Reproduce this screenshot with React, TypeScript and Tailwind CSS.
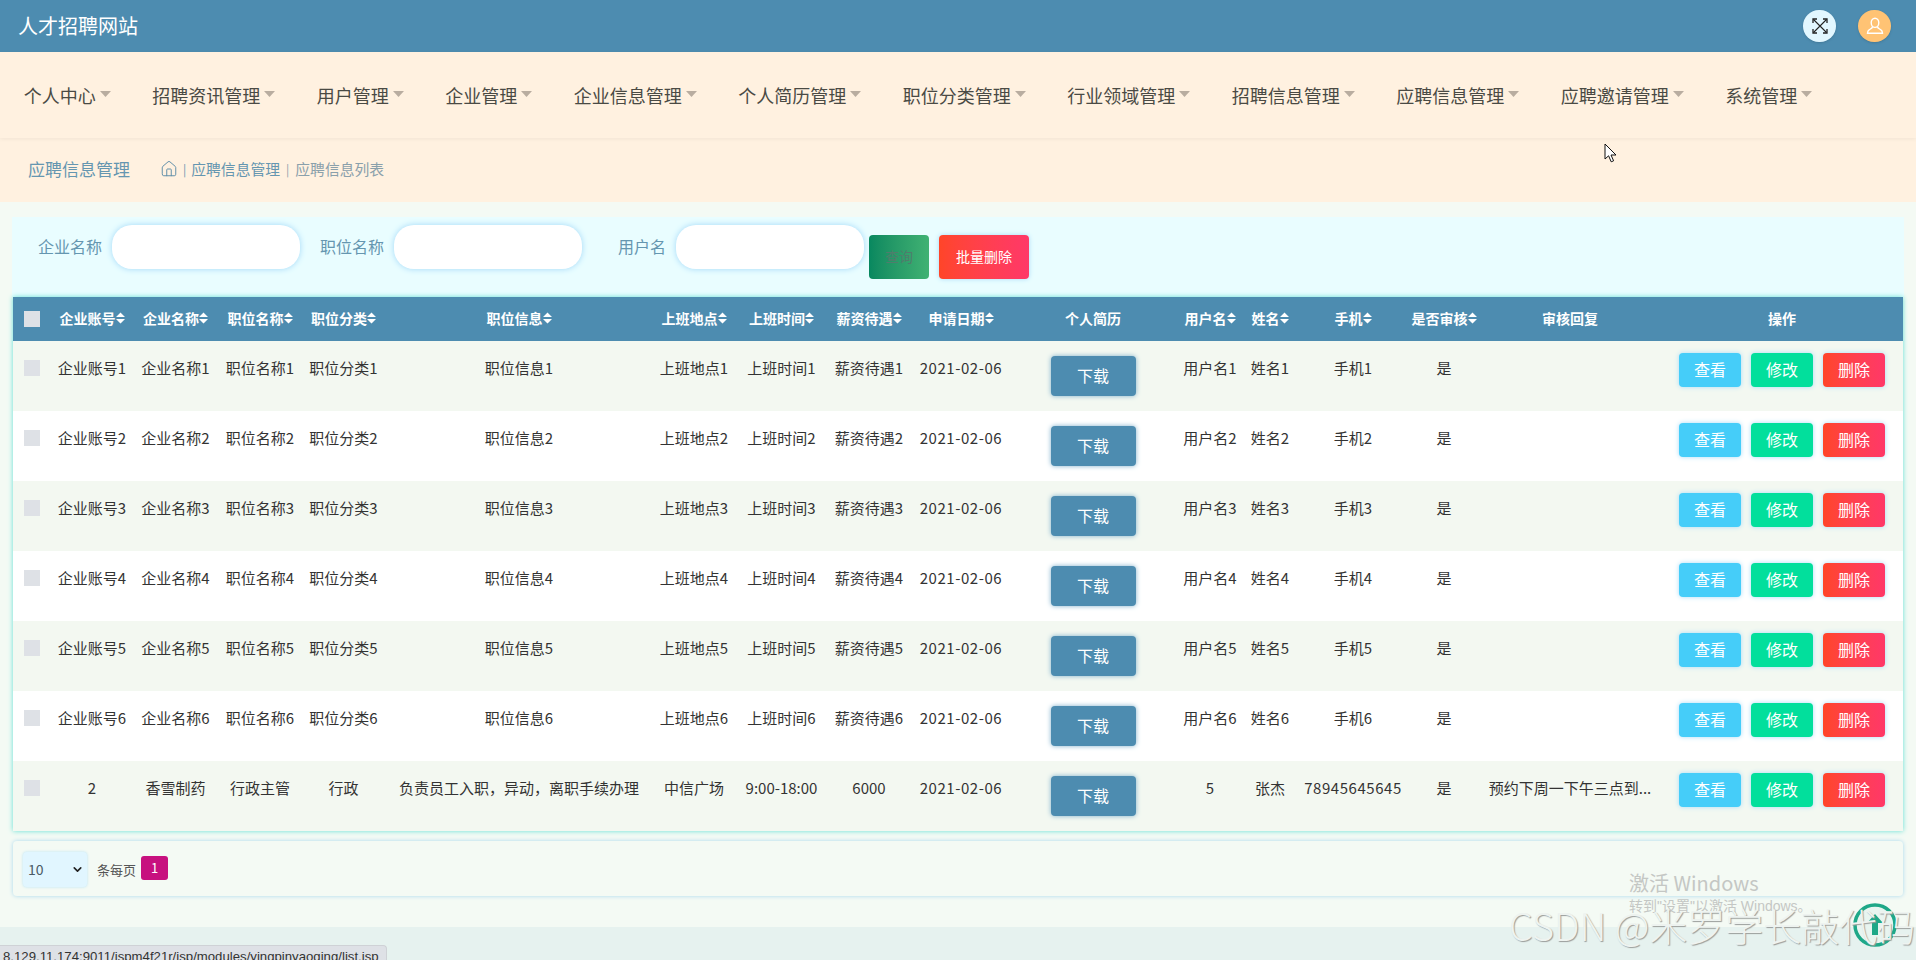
import React from 'react';
import { ChevronDown, Home } from 'lucide-react';

const navItems = ['个人中心', '招聘资讯管理', '用户管理', '企业管理', '企业信息管理', '个人简历管理', '职位分类管理', '行业领域管理', '招聘信息管理', '应聘信息管理', '应聘邀请管理', '系统管理'];

const columns = [
  { title: '企业账号', sort: true, width: 'w-[80px]' },
  { title: '企业名称', sort: true, width: 'w-[87px]' },
  { title: '职位名称', sort: true, width: 'w-[82px]' },
  { title: '职位分类', sort: true, width: 'w-[85px]' },
  { title: '职位信息', sort: true, width: 'w-[266px]' },
  { title: '上班地点', sort: true, width: 'w-[84px]' },
  { title: '上班时间', sort: true, width: 'w-[91px]' },
  { title: '薪资待遇', sort: true, width: 'w-[84px]' },
  { title: '申请日期', sort: true, width: 'w-[100px]' },
  { title: '个人简历', sort: false, width: 'w-[164px]' },
  { title: '用户名', sort: true, width: 'w-[70px]' },
  { title: '姓名', sort: true, width: 'w-[50px]' },
  { title: '手机', sort: true, width: 'w-[116px]' },
  { title: '是否审核', sort: true, width: 'w-[66px]' },
  { title: '审核回复', sort: false, width: 'w-[186px]' },
];

type Row = { before: string[]; after: string[] };

const rows: Row[] = [1, 2, 3, 4, 5, 6].map((n) => ({
  before: [`企业账号${n}`, `企业名称${n}`, `职位名称${n}`, `职位分类${n}`, `职位信息${n}`, `上班地点${n}`, `上班时间${n}`, `薪资待遇${n}`, '2021-02-06'],
  after: [`用户名${n}`, `姓名${n}`, `手机${n}`, '是', ''],
}));

rows.push({
  before: ['2', '香雪制药', '行政主管', '行政', '负责员工入职，异动，离职手续办理', '中信广场', '9:00-18:00', '6000', '2021-02-06'],
  after: ['5', '张杰', '78945645645', '是', '预约下周一下午三点到...'],
});

const Caret = () => (
  <svg width="11" height="6" viewBox="0 0 11 6" className="ml-[4px] mt-[-2px] shrink-0">
    <path d="M0 0h11L5.5 6z" fill="#b9ada0" />
  </svg>
);

const SortIcon = () => (
  <svg width="9" height="12" viewBox="0 0 9 12" className="shrink-0">
    <path d="M4.5 0.5L9 5H0zM4.5 11.5L0 7h9z" fill="#ffffff" />
  </svg>
);

const Cell = ({ text }: { text: string }) => (
  <td className="align-top text-center pt-[15px] px-0">
    <div className={/^[\d-]{7,}$/.test(text) ? 'leading-[24px] whitespace-nowrap tracking-[0.55px]' : 'leading-[24px] whitespace-nowrap'}>{text}</div>
  </td>
);

const App: React.FC = () => {
  return (
    <div className="relative w-full h-[960px] overflow-hidden flex flex-col bg-[#e6f2ef] font-['Noto_Sans_CJK_SC','Microsoft_YaHei',sans-serif] text-[#333333]">

      {/* Top bar */}
      <header className="h-[52px] shrink-0 bg-[#4d8cb0] flex items-center justify-between pl-[18px] pr-[25px]">
        <div className="text-[20px] text-white">人才招聘网站</div>
        <div className="flex items-center gap-[22px]">
          <div className="w-[33px] h-[32px] rounded-full bg-[#e2f7ff] flex items-center justify-center shadow-sm">
            <svg width="16" height="16" viewBox="0 0 16 16" fill="none" stroke="#222222" strokeWidth="1.1">
              <path d="M1.5 1.5l13 13M14.5 1.5l-13 13" />
              <path d="M1 5V1h4M11 1h4v4M15 11v4h-4M5 15H1v-4" strokeWidth="1.3" />
            </svg>
          </div>
          <div className="w-[33px] h-[32px] rounded-full bg-[#ffc374] flex items-center justify-center shadow-sm">
            <svg width="18" height="18" viewBox="0 0 18 18" fill="none" stroke="#ffffff" strokeWidth="1.4">
              <ellipse cx="9" cy="5.8" rx="3.8" ry="4.6" />
              <path d="M6.6 9.6c-.2 1.6-1.8 2.2-3.2 3C2.2 13.300 1.500 14.300 1.500 16.300h15c0-2-.7-3-1.900-3.700-1.400-.8-3-1.400-3.200-3" />
            </svg>
          </div>
        </div>
      </header>

      {/* Nav */}
      <nav className="h-[86px] shrink-0 bg-[#fff1e0] flex items-center pl-[3px] shadow-[0_1px_4px_rgba(0,0,0,0.06)] relative z-10">
        {navItems.map((item) => (
          <div key={item} className="flex items-center px-[20.75px] text-[18px] leading-[24px] text-[#4a4a44] whitespace-nowrap">
            <span>{item}</span>
            <Caret />
          </div>
        ))}
      </nav>

      {/* Breadcrumb */}
      <div className="h-[64px] shrink-0 bg-[#fff1e0] flex items-center pl-[28px] pb-[2px]">
        <div className="text-[17px] text-[#6596b0] w-[132px]">应聘信息管理</div>
        <Home size={18} strokeWidth={1.3} color="#5f8ea8" />
        <span className="text-[12px] text-[#6596b0] mx-[5px]">|</span>
        <span className="text-[14.8px] text-[#6596b0]">应聘信息管理</span>
        <span className="text-[12px] text-[#8aa0ab] mx-[6px]">|</span>
        <span className="text-[14.8px] text-[#8aa0ab]">应聘信息列表</span>
      </div>

      {/* Main */}
      <main className="h-[725px] shrink-0 bg-[#f4faf4] pt-[15px] pl-[12px] pr-[12px]">

        {/* Search */}
        <div className="h-[80px] bg-[#e9fdff] flex items-start pt-[8px] pl-[26px]">
          <label className="flex items-center text-[16px] text-[#6596b0]">
            <span className="pb-[2px]">企业名称</span>
            <input className="w-[188px] h-[44px] ml-[10px] rounded-[20px] bg-white shadow-[0_0_6px_#a0d8f8] outline-none" />
          </label>
          <label className="flex items-center text-[16px] text-[#6596b0] ml-[20px]">
            <span className="pb-[2px]">职位名称</span>
            <input className="w-[188px] h-[44px] ml-[10px] rounded-[20px] bg-white shadow-[0_0_6px_#a0d8f8] outline-none" />
          </label>
          <label className="flex items-center text-[16px] text-[#6596b0] ml-[36px]">
            <span className="pb-[2px]">用户名</span>
            <input className="w-[188px] h-[44px] ml-[10px] rounded-[20px] bg-white shadow-[0_0_6px_#a0d8f8] outline-none" />
          </label>
          <button className="w-[60px] h-[44px] ml-[5px] mt-[10px] pb-[2px] rounded-[4px] bg-gradient-to-r from-[#07885f] to-[#40b273] text-[14px] text-[#4f7d6c]">查询</button>
          <button className="w-[90px] h-[44px] ml-[10px] mt-[10px] pb-[2px] rounded-[4px] bg-gradient-to-r from-[#ff4528] to-[#ff3868] text-[14px] text-white shadow-[0_0_5px_#a8dcf8]">批量删除</button>
        </div>

        {/* Table */}
        <div className="ml-[1px] w-[1890px] shadow-[0_0_5px_#5fe0d4]">
          <table className="w-[1890px] table-fixed border-collapse text-[15px]">
            <colgroup>
              <col className="w-[39px]" />
              {columns.map((c) => (
                <col key={c.title} className={c.width} />
              ))}
              <col className="w-[240px]" />
            </colgroup>
            <thead>
              <tr className="h-[44px] bg-[#4d8cb0] text-white text-[14px] font-bold">
                <th className="pl-[11px] text-left">
                  <div className="w-[16px] h-[16px] bg-[#dee1e6]" />
                </th>
                {columns.map((c) => (
                  <th key={c.title} className="pb-[2px]">
                    <div className="flex items-center justify-center whitespace-nowrap">
                      <span>{c.title}</span>
                      {c.sort && <SortIcon />}
                    </div>
                  </th>
                ))}
                <th className="text-center pb-[2px] pr-[2px]">操作</th>
              </tr>
            </thead>
            <tbody>
              {rows.map((row, i) => (
                <tr key={i} className="h-[70px] even:bg-white odd:bg-[#f3f8f1]">
                  <td className="align-top pl-[11px] pt-[19px]">
                    <div className="w-[16px] h-[16px] bg-[#dee1e6]" />
                  </td>
                  {row.before.map((text, j) => (
                    <Cell key={j} text={text} />
                  ))}
                  <td className="align-top text-center pt-[15px]">
                    <button className="w-[85px] h-[40px] pb-[2px] rounded-[4px] bg-[#4d8cb0] text-[16px] text-white shadow-[0_0_5px_#7fb0cc]">下载</button>
                  </td>
                  {row.after.map((text, j) => (
                    <Cell key={j} text={text} />
                  ))}
                  <td className="align-top pt-[12px] pr-[18px]">
                    <div className="flex justify-end gap-[10px]">
                      <button className="w-[62px] h-[34px] pb-[2px] rounded-[4px] bg-[#45cdf9] text-[16px] text-white shadow-[0_0_5px_#a8dcf8]">查看</button>
                      <button className="w-[62px] h-[34px] pb-[2px] rounded-[4px] bg-[#02df9c] text-[16px] text-white shadow-[0_0_5px_#a8dcf8]">修改</button>
                      <button className="w-[62px] h-[34px] pb-[2px] rounded-[4px] bg-gradient-to-r from-[#ff4528] to-[#ff3868] text-[16px] text-white shadow-[0_0_5px_#a8dcf8]">删除</button>
                    </div>
                  </td>
                </tr>
              ))}
            </tbody>
          </table>
        </div>

        {/* Pagination */}
        <div className="ml-[1px] mt-[10px] w-[1890px] h-[55px] rounded-[4px] bg-[#f4faf4] shadow-[0_0_4px_#a8d8ee] flex items-start pl-[10px]">
          <div className="relative mt-[11px] w-[64px] h-[35px]">
            <select className="w-[64px] h-[35px] appearance-none rounded-[4px] bg-[#e1f6ff] text-[14px] pl-[5px] text-[#4a5a66] shadow-[0_0_3px_#b5e2f5] outline-none" defaultValue="10">
              <option value="10">10</option>
            </select>
            <ChevronDown size={13} strokeWidth={3} color="#222222" className="absolute right-[3px] top-[11px] pointer-events-none" />
          </div>
          <span className="ml-[10px] mt-[19px] text-[13px] leading-[20px] text-[#555555]">条每页</span>
          <div className="ml-[5px] mt-[15px] w-[27px] h-[24px] rounded-[3px] bg-[#c7117f] text-white text-[13px] flex items-center justify-center">1</div>
        </div>
      </main>

      {/* Browser status bubble */}
      <div className="absolute left-0 top-[945px] w-[387px] h-[20px] bg-[#dee1e6] rounded-tr-[4px] pl-[3px] pt-[2px] text-[13.2px] leading-[18px] text-[#333333] font-['Liberation_Sans',sans-serif] border-t border-r border-[#cfd2d6]">
        8.129.11.174:9011/jspm4f21r/jsp/modules/yingpinyaoqing/list.jsp
      </div>

      {/* Mouse cursor */}
      <svg width="14" height="20" viewBox="0 0 14 20" className="absolute left-[1604px] top-[143px]">
        <path d="M1 1v15l3.6-3.2 2.6 6 2.4-1-2.6-5.8h5z" fill="#ffffff" stroke="#111111" strokeWidth="1" />
      </svg>

      {/* Back to top */}
      <svg width="44" height="44" viewBox="0 0 44 44" className="absolute left-[1853px] top-[903px]">
        <circle cx="22" cy="22" r="20" fill="#e8f5f0" stroke="#1fa888" strokeWidth="3.5" />
        <path d="M22 11l8 9h-5v12h-6V20h-5z" fill="#1fa888" />
      </svg>

      {/* Watermarks */}
      <div className="absolute left-[1629px] top-[869px] text-[20px] leading-[28px] text-[#c4c7c4] whitespace-nowrap">激活 Windows</div>
      <div className="absolute left-[1629px] top-[897px] text-[14px] leading-[18px] text-[#c4c7c4] whitespace-nowrap font-['Liberation_Sans','Noto_Sans_CJK_SC',sans-serif]">转到"设置"以激活 Windows。</div>
      <div className="absolute left-[1509px] top-[898px] text-[38px] leading-[54px] text-[#eef3f0] whitespace-nowrap font-light [text-shadow:1px_1px_1px_#9a9d9b]">CSDN @米罗学长敲代码</div>
    </div>
  );
};

export default App;
